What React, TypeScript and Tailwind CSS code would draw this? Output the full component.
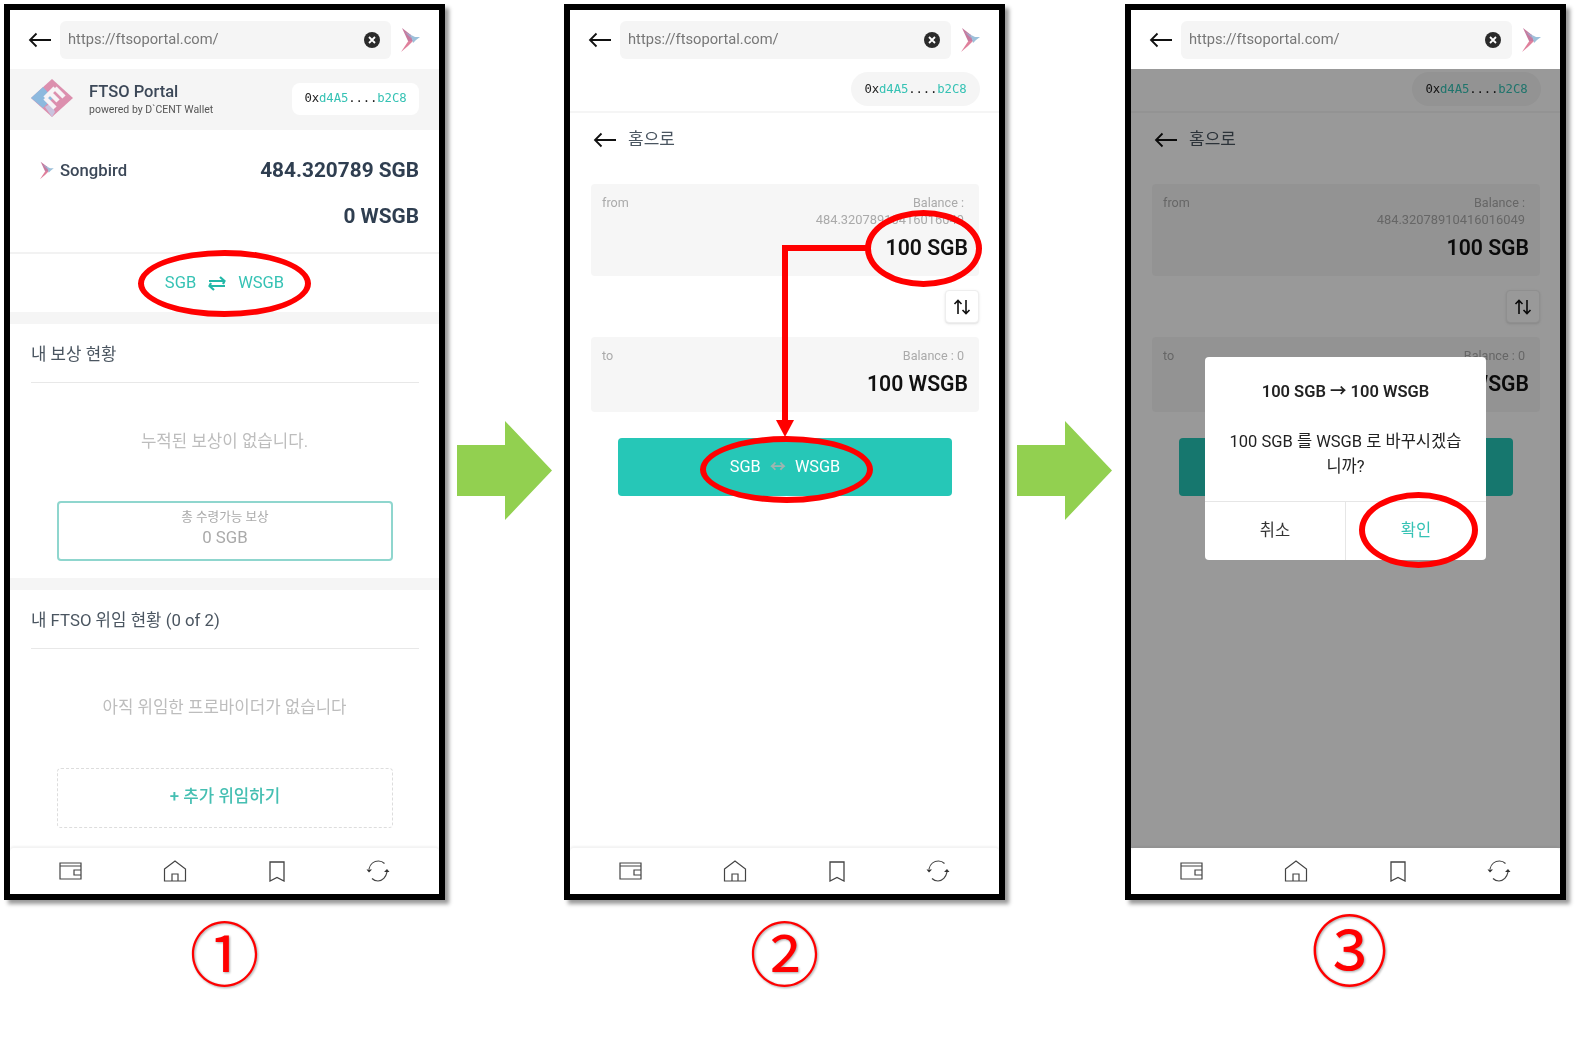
import React from "react";

const Bird = ({ w = 20, h = 26 }: { w?: number; h?: number }) => (
  <svg width={w} height={h} viewBox="0 0 20 26">
    <polygon points="1,25 9,13 14,13 8,19" fill="#e0809c" />
    <polygon points="2,1 11,8 13,14 8,14" fill="#c77a9e" />
    <polygon points="5,5 11,8 12,12" fill="#a0a8cc" />
    <polygon points="11,8 15,10 20,10 16,13 13,16" fill="#9cc0da" />
  </svg>
);

const BackArrow = () => (
  <svg width="24" height="16" viewBox="0 0 24 16" fill="none" stroke="#111" strokeWidth="1.8">
    <path d="M23 8H2M8.5 1.500L2 8l6.500 6.500" />
  </svg>
);

const Address = ({ bg, className }: { bg: string; className: string }) => (
  <div className={`flex items-center justify-center font-['DejaVu_Sans_Mono',monospace] text-[12.3px] tracking-[-0.01em] ${bg} ${className}`}>
    <span className="text-[#222]">0x</span>
    <span className="text-[#35c2b4]">d4A5</span>
    <span className="text-[#222]">....</span>
    <span className="text-[#35c2b4]">b2C8</span>
  </div>
);

const TopBar = () => (
  <div className="flex h-[59px] shrink-0 items-center bg-white pl-[18px]">
    <BackArrow />
    <div className="ml-[8px] flex h-[38px] w-[331px] items-center justify-between rounded-md bg-[#f5f5f5] pl-2 pr-[11px]">
      <span className="text-[14.7px] text-[#777]">https://ftsoportal.com/</span>
      <svg width="16" height="16" viewBox="0 0 16 16">
        <circle cx="8" cy="8" r="8" fill="#2b2b2b" />
        <path d="M5 5l6 6M11 5l-6 6" stroke="#fff" strokeWidth="1.8" />
      </svg>
    </div>
    <div className="ml-[9px]">
      <Bird />
    </div>
  </div>
);

const BottomNav = () => (
  <div className="mt-auto flex h-[46px] shrink-0 items-center justify-between rounded-t bg-white pl-[49px] pr-[49px] shadow-[0_-2px_2px_rgba(0,0,0,0.05)]">
    <svg width="23" height="18" viewBox="0 0 23 18" fill="none" stroke="#444" strokeWidth="1.2">
      <path d="M1 1h21v16H1zM1 4h21M22 8h-7v5h7" />
    </svg>
    <svg width="24" height="22" viewBox="0 0 24 22" fill="none" stroke="#444" strokeWidth="1.2">
      <path d="M1.500 9L12 1l10.500 8v12h-21zM9 21v-7h6v7" />
    </svg>
    <svg width="16" height="21" viewBox="0 0 16 21" fill="none" stroke="#444" strokeWidth="1.3">
      <path d="M1 1h14v19l-7-3.500L1 20z" />
    </svg>
    <svg width="24" height="22" viewBox="0 0 24 22" fill="none" stroke="#444" strokeWidth="1.2">
      <path d="M3 9C4 4 8 1 12.500 1c2.500 0 4.500 1 6 2.500M21 12c-1 5-4.500 9-9 9-2.500 0-4.500-1-6-2.500" />
      <path d="M0.500 9.500L6 9.500 3 12.500zM18 12h5.500l-2.500-3z" fill="#333" stroke="none" />
    </svg>
  </div>
);

const Section = ({ title, empty, children }: { title: string; empty: string; children: React.ReactNode }) => (
  <div className="h-[255px] shrink-0 bg-white">
    <div className="ml-[21px] mr-[20px] flex h-[59px] items-center border-b border-[#e8e8e8] pt-[4px] text-[16.8px] text-[#4a5560]">{title}</div>
    <div className="flex h-[118px] items-center justify-center text-[16.8px] text-[#bdbdbd]">{empty}</div>
    {children}
  </div>
);

const Frame = ({ children }: { children: React.ReactNode }) => (
  <div className="h-[896px] w-[441px] border-[6px] border-black bg-white shadow-[4px_4px_4px_rgba(0,0,0,0.4)]">
    <div className="relative flex h-full flex-col overflow-visible">{children}</div>
  </div>
);

const Ring = ({ className }: { className: string }) => (
  <div className={`absolute rounded-[50%] border-[6px] border-[#f00] ${className}`} />
);

const GreenArrow = () => (
  <div className="flex w-[119px] shrink-0 justify-center pt-[417px]">
    <svg width="95" height="99" viewBox="0 0 95 99">
      <polygon points="0,24 48,24 48,0 95,49.500 48,99 48,75 0,75" fill="#92d050" />
    </svg>
  </div>
);

const Circled = ({ children, className }: { children: string; className: string }) => (
  <div className={`text-center text-[#f00] font-['Noto_Sans_CJK_KR',sans-serif] drop-shadow-[1px_1px_1px_rgba(0,0,0,0.35)] ${className}`}>{children}</div>
);

const Screen1 = () => (
  <Frame>
    <TopBar />
    <div className="flex h-[61px] shrink-0 items-center bg-[#f5f5f5] pl-[21px] pr-[20px]">
      <svg width="42" height="38" viewBox="0 0 42 38" className="mb-[4px]">
        <polygon points="21,0 42,19 21,38 0,19" fill="#dc8fae" />
        <polygon points="0,19 12,8 22,19 12,29" fill="#8db9de" />
        <polygon points="14,28 20,24 24,33 21,38" fill="#c9c3de" />
        <path d="M14 19L24 9M14 19L24 29M24 9L33 18M19 14L27 22" fill="none" stroke="#f7f3f6" strokeWidth="4.500" />
      </svg>
      <div className="mb-[2px] ml-4 flex flex-col">
        <span className="text-[16.500px] font-medium leading-[21px] text-[#3c4858]">FTSO Portal</span>
        <span className="text-[10.500px] leading-[15px] text-[#555]">powered by D`CENT Wallet</span>
      </div>
      <Address bg="bg-white" className="mb-[2px] ml-auto h-[32px] w-[127px] rounded-lg" />
    </div>
    <div className="flex h-[124px] shrink-0 flex-col items-end border-b-2 border-[#f2f2f2] pl-[21px] pr-[20px] pt-[27px]">
      <div className="flex h-[28px] w-full items-center justify-between">
        <div className="flex items-center gap-[6px] pl-[8px]">
          <Bird w={15} h={19} />
          <span className="text-[16.700px] font-medium text-[#3c4858]">Songbird</span>
        </div>
        <span className="text-[20.800px] font-bold text-[#2f3e50]">484.320789 SGB</span>
      </div>
      <span className="mt-[17px] text-[20.800px] font-bold leading-[28px] text-[#2f3e50]">0 WSGB</span>
    </div>
    <div className="flex h-[58px] shrink-0 items-center justify-center gap-[11px] text-[16.500px] text-[#35c2b4]">
      <span>SGB</span>
      <svg width="20" height="15" viewBox="0 0 20 15" fill="none" stroke="#22b8a8" strokeWidth="2.200">
        <path d="M2 5h15M13 1l4.500 4-1.500 3M18 10H3M7 14L2.500 10 4 7" />
      </svg>
      <span>WSGB</span>
    </div>
    <div className="h-[12px] shrink-0 bg-[#f5f5f5]" />
    <Section title="내 보상 현황" empty="누적된 보상이 없습니다.">
      <div className="ml-[47px] mr-[46px] flex h-[60px] flex-col items-center justify-center rounded border-2 border-[#8fd6ce] pb-[5px] text-[#aaa]">
        <span className="text-[12.600px] leading-[17px]">총 수령가능 보상</span>
        <span className="text-[16.800px] leading-[25px]">0 SGB</span>
      </div>
    </Section>
    <div className="-mt-[1px] h-[12px] shrink-0 bg-[#f5f5f5]" />
    <Section title="내 FTSO 위임 현황 (0 of 2)" empty="아직 위임한 프로바이더가 없습니다">
      <div className="ml-[47px] mr-[46px] mt-[1px] flex h-[60px] items-center justify-center rounded border border-dashed border-[#ddd] pb-[2px] text-[16.800px] font-medium text-[#45bfb2]">
        + 추가 위임하기
      </div>
    </Section>
    <BottomNav />
    <Ring className="left-[128px] top-[240px] h-[67px] w-[173px]" />
  </Frame>
);

const SwapBody = ({ balance }: { balance: string }) => (
  <>
    <TopBar />
    <div className="flex h-[44px] shrink-0 items-start justify-end border-b-2 border-[#f5f5f5] pr-[19px] pt-[3px]">
      <Address bg="bg-[#f5f5f5]" className="h-[34px] w-[129px] rounded-full" />
    </div>
    <div className="flex h-[52px] shrink-0 items-center gap-[11px] pl-[23px] pt-[1px]">
      <BackArrow />
      <span className="text-[17px] text-[#4a5560]">홈으로</span>
    </div>
    <div className="ml-[21px] mr-[20px] mt-[19px] h-[92px] shrink-0 rounded bg-[#f6f6f6] pl-[11px] pr-[11px] pt-[11px]">
      <div className="flex justify-between pr-[4px] text-[12.600px] leading-[16px] text-[#aaa]">
        <span>from</span>
        <span>Balance :</span>
      </div>
      <div className="pr-[4px] text-right text-[12.900px] leading-[17px] text-[#aaa]">{balance}</div>
      <div className="mt-[6px] text-right text-[21.200px] font-semibold leading-[28px] text-[#111]">100 SGB</div>
    </div>
    <div className="mr-[20px] mt-[14px] flex h-[33px] w-[34px] shrink-0 items-center justify-center self-end rounded border border-[#eee] bg-white shadow-sm">
      <svg width="18" height="16" viewBox="0 0 18 16" fill="none" stroke="#111" strokeWidth="1.600">
        <path d="M5 15V1.500M1.500 5L5 1.500 8.500 5M13 1v13.500M9.500 11l3.500 3.500 3.500-3.500" />
      </svg>
    </div>
    <div className="ml-[21px] mr-[20px] mt-[14px] h-[75px] shrink-0 rounded bg-[#f6f6f6] pl-[11px] pr-[11px] pt-[11px]">
      <div className="flex justify-between pr-[4px] text-[12.600px] leading-[16px] text-[#aaa]">
        <span>to</span>
        <span>Balance : 0</span>
      </div>
      <div className="mt-[6px] text-right text-[21.200px] font-semibold leading-[28px] text-[#111]">100 WSGB</div>
    </div>
    <div className="ml-[48px] mr-[47px] mt-[26px] flex h-[58px] shrink-0 items-center justify-center gap-[9px] rounded bg-[#26c7b7] pt-[1px] text-[16.300px] text-white">
      <span>SGB</span>
      <span className="font-bold text-[#9fb5b0]">↔</span>
      <span>WSGB</span>
    </div>
    <BottomNav />
  </>
);

const Screen2 = () => (
  <Frame>
    <SwapBody balance="484.32078910416016049" />
    <svg className="absolute left-[206px] top-[235px]" width="92" height="194" viewBox="0 0 92 194">
      <path d="M92 3H9v172" fill="none" stroke="#f00" strokeWidth="6" />
      <polygon points="0,175 18,175 9,192" fill="#f00" />
    </svg>
    <Ring className="left-[295px] top-[200px] h-[77px] w-[117px]" />
    <Ring className="left-[130px] top-[426px] h-[67px] w-[173px]" />
  </Frame>
);

const Screen3 = () => (
  <Frame>
    <SwapBody balance="484.32078910416016049" />
    <div className="absolute inset-x-0 bottom-[46px] top-[59px] bg-black/40" />
    <div className="absolute left-[74px] top-[347px] flex h-[203px] w-[281px] flex-col rounded bg-white">
      <div className="flex h-[144px] flex-col items-center px-4 pt-[23px] text-center text-[16.500px] text-[#222]">
        <span className="font-semibold leading-[24px]">100 SGB → 100 WSGB</span>
        <span className="mt-[26px] leading-[24.500px]">
          100 SGB 를 WSGB 로 바꾸시겠습
          <br />
          니까?
        </span>
      </div>
      <div className="flex flex-1 border-t border-[#e6e6e6] text-[16.500px]">
        <div className="flex flex-1 items-center justify-center border-r border-[#e6e6e6] text-[#333]">취소</div>
        <div className="flex flex-1 items-center justify-center text-[#35c2b4]">확인</div>
      </div>
    </div>
    <Ring className="left-[228px] top-[482px] h-[76px] w-[119px]" />
  </Frame>
);

export default function App() {
  return (
    <div className="flex h-[1042px] w-[1578px] overflow-hidden bg-white pl-1 pt-1 font-[Roboto,'Noto_Sans_CJK_KR',sans-serif] blur-[0.3px]">
      <div className="flex w-[441px] shrink-0 flex-col">
        <Screen1 />
        <Circled className="mt-[1px] text-[70px] leading-[100px]">①</Circled>
      </div>
      <GreenArrow />
      <div className="flex w-[441px] shrink-0 flex-col">
        <Screen2 />
        <Circled className="mt-[1px] text-[70px] leading-[100px]">②</Circled>
      </div>
      <GreenArrow />
      <div className="w-[1px] shrink-0" />
      <div className="flex w-[441px] shrink-0 flex-col">
        <Screen3 />
        <Circled className="mt-[-8px] pl-2 text-[77px] leading-[110px]">③</Circled>
      </div>
    </div>
  );
}
